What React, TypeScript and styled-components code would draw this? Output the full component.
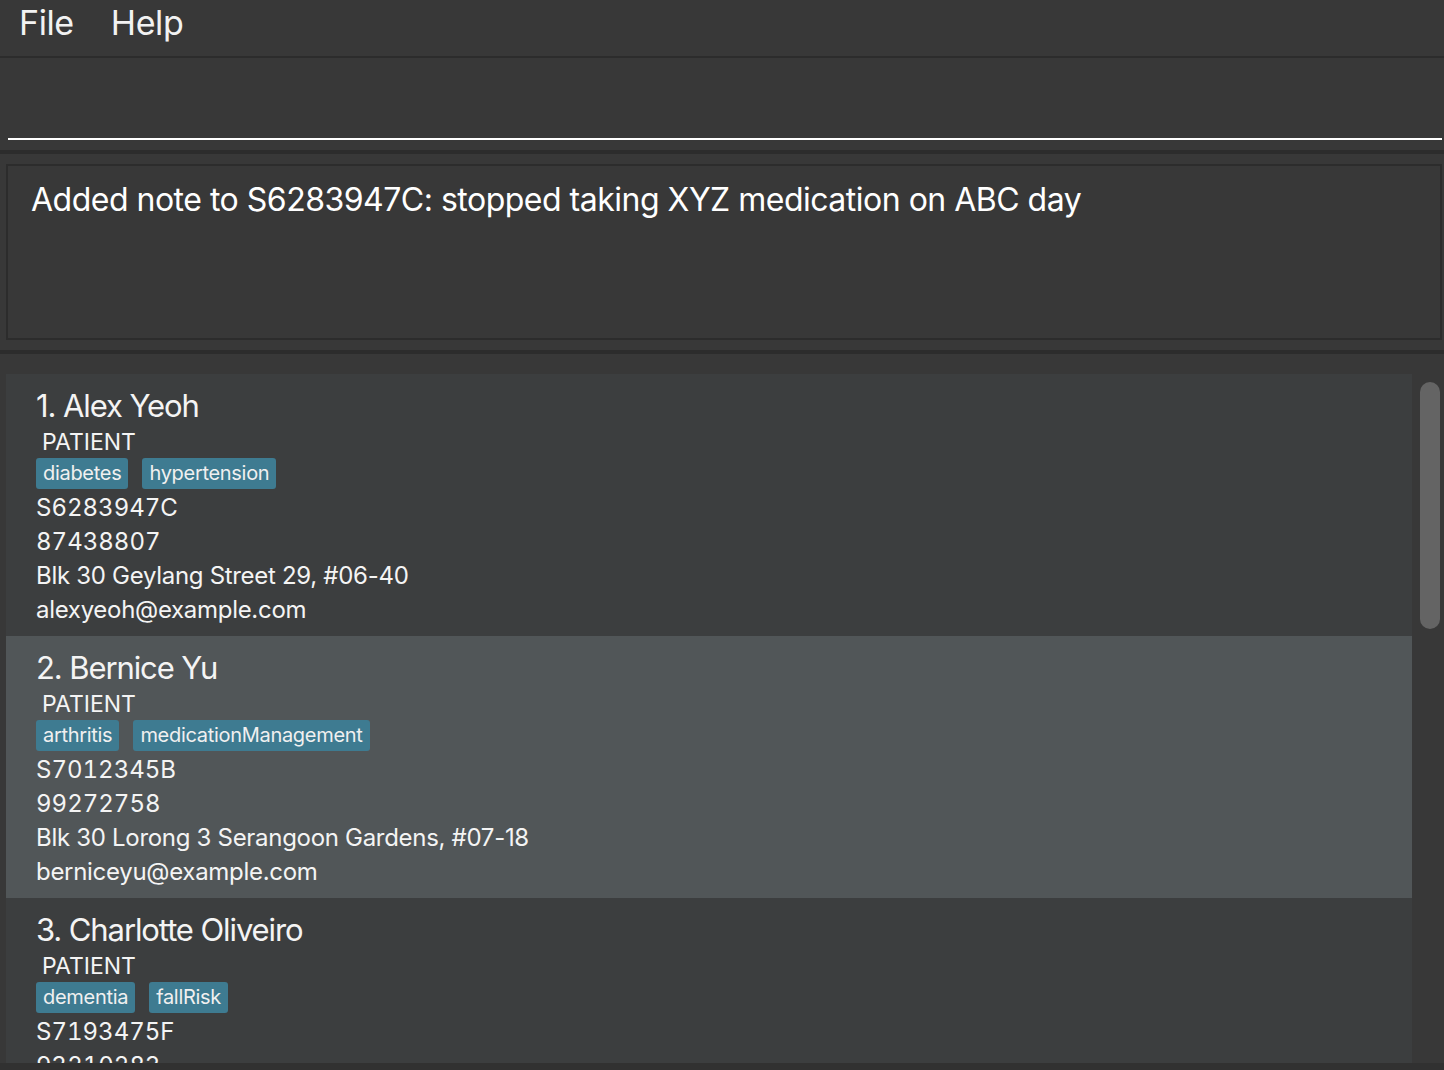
import React from "react";
import styled, { createGlobalStyle } from "styled-components";

const GlobalStyle = createGlobalStyle`
  *, *::before, *::after {
    box-sizing: border-box;
  }
  html, body {
    margin: 0;
    padding: 0;
    background: #383838;
    overflow: hidden;
  }
  body {
    font-family: Inter, "Open Sans", "Liberation Sans", sans-serif;
    color: #ffffff;
  }
`;

const Page = styled.div`
  width: 1444px;
  height: 1070px;
  display: flex;
  flex-direction: column;
  background: #383838;
  overflow: hidden;
`;

const MenuBar = styled.div`
  height: 58px;
  flex: none;
  display: flex;
  align-items: flex-start;
  gap: 37px;
  padding: 3px 0 0 19px;
  border-bottom: 2px solid #2c2c2c;
`;

const MenuItem = styled.span`
  font-size: 34px;
  line-height: 40px;
  color: #f2f2f2;
  letter-spacing: -0.4px;
`;

const CommandArea = styled.div`
  height: 92px;
  flex: none;
  display: flex;
  align-items: flex-end;
  padding: 0 2px 10px 8px;
`;

const CommandInput = styled.div`
  flex: 1;
  height: 60px;
  border-bottom: 2px solid #ffffff;
`;

const Separator = styled.div`
  height: 4px;
  flex: none;
  background: #2c2c2c;
`;

const ResultArea = styled.div`
  flex: none;
  padding: 10px 2px 10px 6px;
`;

const ResultBox = styled.div`
  height: 176px;
  border: 2px solid #2c2c2c;
  padding: 14px 23px;
  font-size: 32px;
  letter-spacing: -0.5px;
  line-height: 40px;
  color: #ffffff;
`;

const ListArea = styled.div`
  flex: 1;
  min-height: 0;
  display: flex;
  padding: 20px 0 0 6px;
  overflow: hidden;
`;

const List = styled.div`
  flex: 1;
  display: flex;
  flex-direction: column;
  overflow: hidden;
`;

const ScrollTrack = styled.div`
  width: 32px;
  flex: none;
  display: flex;
  justify-content: center;
  padding-top: 8px;
`;

const ScrollThumb = styled.div`
  width: 20px;
  height: 247px;
  border-radius: 10px;
  background: #646464;
  margin-left: 4px;
`;

const Card = styled.div<{ $selected?: boolean }>`
  height: 262px;
  flex: none;
  padding: 12px 0 0 30px;
  background: ${(p) => (p.$selected ? "#515658" : "#3c3e3f")};
  display: flex;
  flex-direction: column;
`;

const Name = styled.div`
  font-size: 31px;
  line-height: 40px;
  height: 40px;
  color: #f4f4f4;
  letter-spacing: -1.1px;
`;

const Role = styled.div`
  font-size: 23px;
  line-height: 32px;
  height: 32px;
  padding-left: 6px;
  color: #f4f4f4;
`;

const Tags = styled.div`
  display: flex;
  gap: 14px;
  height: 31px;
  margin-bottom: 2px;
`;

const Tag = styled.span`
  background: #3e7b91;
  border-radius: 3px;
  padding: 0 7px;
  height: 31px;
  line-height: 31px;
  font-size: 20px;
  color: #f0f0f0;
  letter-spacing: -0.3px;
`;

const Detail = styled.div<{ $numeric?: boolean }>`
  font-size: 24px;
  line-height: 34px;
  height: 34px;
  color: #f4f4f4;
  letter-spacing: ${(p) => (p.$numeric ? "0px" : "-0.3px")};
  font-feature-settings: ${(p) => (p.$numeric ? '"tnum" 1' : "normal")};
  white-space: nowrap;
`;

const BottomStrip = styled.div`
  height: 7px;
  flex: none;
  background: #313131;
`;

type Person = {
  name: string;
  tags: string[];
  id: string;
  phone: string;
  address: string;
  email: string;
};

const people: Person[] = [
  {
    name: "Alex Yeoh",
    tags: ["diabetes", "hypertension"],
    id: "S6283947C",
    phone: "87438807",
    address: "Blk 30 Geylang Street 29, #06-40",
    email: "alexyeoh@example.com",
  },
  {
    name: "Bernice Yu",
    tags: ["arthritis", "medicationManagement"],
    id: "S7012345B",
    phone: "99272758",
    address: "Blk 30 Lorong 3 Serangoon Gardens, #07-18",
    email: "berniceyu@example.com",
  },
  {
    name: "Charlotte Oliveiro",
    tags: ["dementia", "fallRisk"],
    id: "S7193475F",
    phone: "93210283",
    address: "Blk 11 Ang Mo Kio Street 74, #11-04",
    email: "charlotte@example.com",
  },
];

export default function App() {
  return (
    <Page>
      <GlobalStyle />
      <MenuBar>
        <MenuItem>File</MenuItem>
        <MenuItem>Help</MenuItem>
      </MenuBar>
      <CommandArea>
        <CommandInput />
      </CommandArea>
      <Separator />
      <ResultArea>
        <ResultBox>
          Added note to S6283947C: stopped taking XYZ medication on ABC day
        </ResultBox>
      </ResultArea>
      <Separator />
      <ListArea>
        <List>
          {people.map((p, i) => (
            <Card key={p.id} $selected={i === 1}>
              <Name>
                {i + 1}. {p.name}
              </Name>
              <Role>PATIENT</Role>
              <Tags>
                {p.tags.map((t) => (
                  <Tag key={t}>{t}</Tag>
                ))}
              </Tags>
              <Detail $numeric>{p.id}</Detail>
              <Detail $numeric>{p.phone}</Detail>
              <Detail>{p.address}</Detail>
              <Detail>{p.email}</Detail>
            </Card>
          ))}
        </List>
        <ScrollTrack>
          <ScrollThumb />
        </ScrollTrack>
      </ListArea>
      <BottomStrip />
    </Page>
  );
}
